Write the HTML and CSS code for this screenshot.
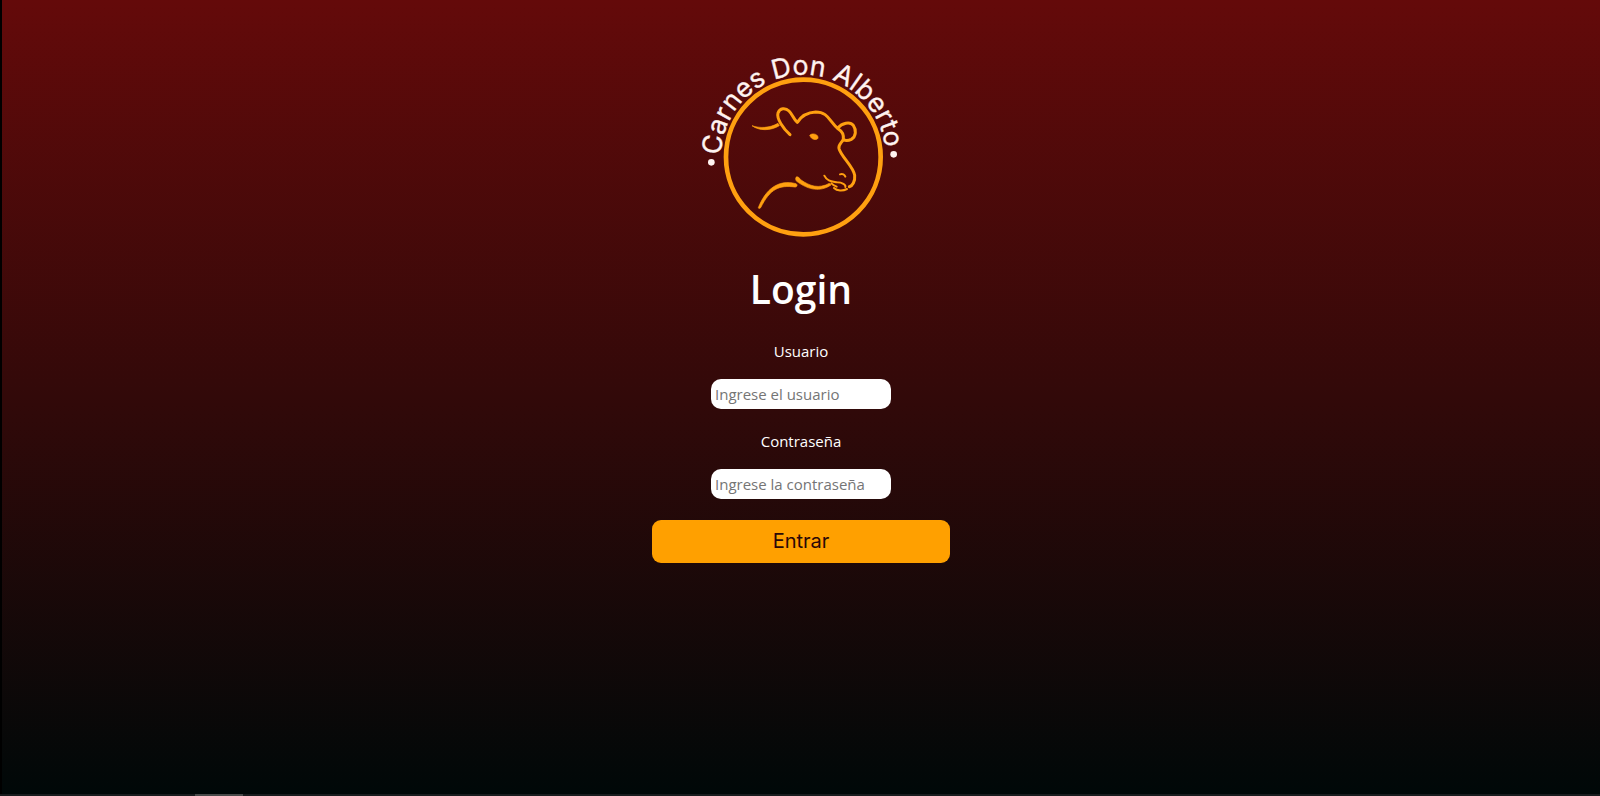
FILE: index.html
```html
<!DOCTYPE html>
<html lang="es">
<head>
<meta charset="utf-8">
<meta name="viewport" content="width=device-width, initial-scale=1">
<title>Login</title>
<link rel="stylesheet" href="styles.css">
</head>
<body>
<main class="page">
  <svg class="logo" viewBox="3 0 660 630" role="img" aria-label="Carnes Don Alberto">
    <defs><path id="arc" d="M93 351a247 247 0 0 1 494 0"/></defs>
    <text class="logo-text" text-anchor="middle"><textPath href="#arc" startOffset="48.6%">Carnes Don Alberto</textPath></text>
    <circle class="logo-dot" cx="64" cy="367" r="10"/>
    <circle class="logo-dot" cx="611" cy="343" r="10"/>
    <circle class="logo-ring" cx="340" cy="351" r="232"/>
    <g class="logo-fill">
      <path d="M186 257C208 265 238 265 264 250L268 257C242 273 207 273 186 257Z"/>
      <path d="M359 286C365 279 382 281 384 291C385 299 377 300 369 297C363 295 362 291 359 286Z"/>
      <path d="M205 503C226 450 262 417 318 431C324 434 321 442 315 441C267 435 241 446 212 503C210 506 205 506 205 503Z"/>
      <path d="M318 412C322 408 328 413 332 419C360 439 387 447 418 430L423 435C391 456 357 451 320 424C317 420 316 416 318 412Z"/>
    </g>
    <g class="logo-line">
      <path d="M300 284C280 266 259 236 264 219C269 204 286 202 297 213C309 225 309 235 322 247C334 228 354 217 377 216C416 216 417 245 445 267C455 273 462 282 460 298C455 309 444 314 447 326C454 351 490 379 494 406C496 424 487 438 478 440"/>
      <path d="M443 264C456 249 480 243 490 256C499 269 499 290 484 298C476 302 467 303 460 299"/>
    </g>
    <g class="logo-thin">
      <path d="M403 407C411 424 426 424 441 427C457 427 468 434 466 441"/>
      <path d="M432 444C441 453 458 454 471 447"/>
      <path d="M424 430C429 435 434 438 440 440"/>
      <path d="M450 403C458 400 464 404 466 410"/>
    </g>
  </svg>
  <h1 class="title">Login</h1>
  <form class="form">
    <label class="label" for="user">Usuario</label>
    <input class="field" id="user" type="text" placeholder="Ingrese el usuario">
    <label class="label" for="pass">Contraseña</label>
    <input class="field" id="pass" type="password" placeholder="Ingrese la contraseña">
    <button class="submit" type="submit">Entrar</button>
  </form>
</main>
<footer class="strip"><span class="strip-mark"></span></footer>
</body>
</html>
```
FILE: styles.css
```css
* { box-sizing: border-box; }

body {
  margin: 0;
  min-height: 100vh;
  display: flex;
  flex-direction: column;
  background: #000;
  color: #fff;
  font-family: "Open Sans", "Noto Sans", sans-serif;
}

.page {
  flex: 1;
  display: flex;
  flex-direction: column;
  align-items: center;
  padding: 40px 0;
  border-left: 2px solid #000;
  background: linear-gradient(#640a0a, #000808);
}

.logo { width: 220px; height: auto; }
.logo-text { font-family: Inter, sans-serif; font-size: 80px; fill: #fff3f0; stroke: #fff3f0; stroke-width: 1; }
.logo-dot { fill: #fff3f0; }
.logo-ring { fill: none; stroke: #ffa010; stroke-width: 14; }
.logo-fill { fill: #ffa010; stroke: #ffa010; stroke-width: 2; }
.logo-line { fill: none; stroke: #ffa010; stroke-width: 9; stroke-linecap: round; stroke-linejoin: round; }
.logo-thin { fill: none; stroke: #ffa010; stroke-width: 6; stroke-linecap: round; stroke-linejoin: round; }

.title {
  margin: 12px 0 24px;
  font-size: 39px;
  line-height: 54px;
  font-weight: 600;
}

.form {
  width: 298px;
  max-width: 100%;
  display: flex;
  flex-direction: column;
  align-items: center;
}

.label { margin-bottom: 17px; font-size: 15px; line-height: 22px; }

.field {
  width: 180px;
  height: 30px;
  margin: 0 0 21px;
  padding: 0 4px;
  border: 0;
  border-radius: 10px;
  background: #fff;
  color: #222;
  font: 15px "Open Sans", "Noto Sans", sans-serif;
}
.field::placeholder { color: #757575; }

.submit {
  width: 100%;
  height: 43px;
  padding: 0 0 2px;
  border: 0;
  border-radius: 9px;
  background: #ffa000;
  color: #2a0808;
  font: 20px Inter, sans-serif;
}

.strip { height: 2px; display: flex; padding-left: 195px; background: #181c1e; }
.strip-mark { width: 48px; background: #484a4a; }
```
